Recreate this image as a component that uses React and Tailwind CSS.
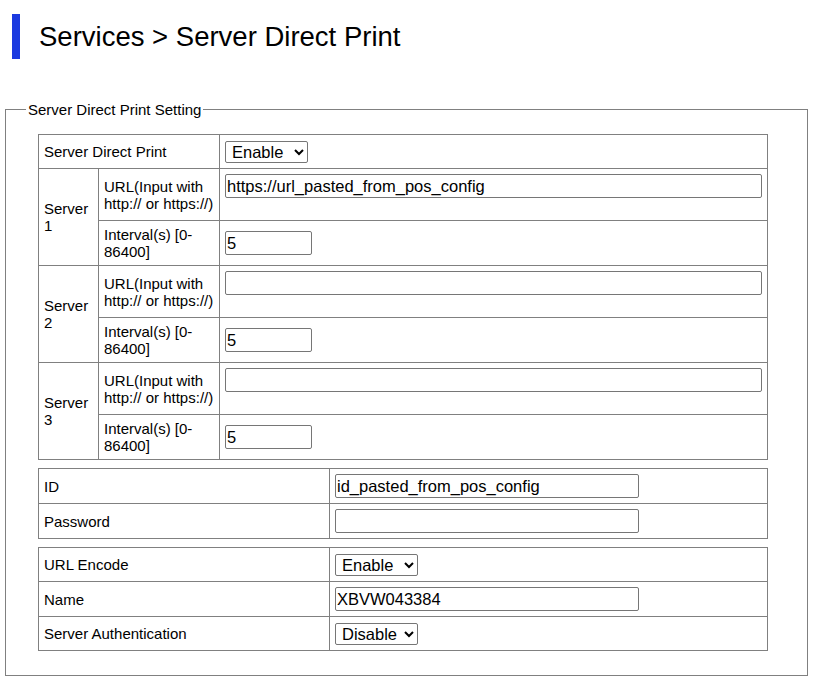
import React, { useState } from "react";

const cell = "border-r border-b border-[#808080] flex items-center px-[5px] leading-[17px]";

const Select = ({ value, onChange, options }) => (
  <select
    value={value}
    onChange={(e) => onChange(e.target.value)}
    className="w-[83px] h-[22px] border border-[#767676] rounded-[2px] bg-white text-[16.5px] text-black pl-[2px]"
  >
    {options.map((o) => (
      <option key={o}>{o}</option>
    ))}
  </select>
);

const TextInput = ({ width, value }) => {
  const [v, setV] = useState(value);
  return (
    <input
      type="text"
      value={v}
      onChange={(e) => setV(e.target.value)}
      className={`${width} h-[24px] border border-[#767676] rounded-[2px] px-[1px] text-[16.5px] text-black bg-white`}
    />
  );
};

const App = () => {
  const [sdp, setSdp] = useState("Enable");
  const [encode, setEncode] = useState("Enable");
  const [auth, setAuth] = useState("Disable");

  const servers = [
    { n: 1, url: "https://url_pasted_from_pos_config" },
    { n: 2, url: "" },
    { n: 3, url: "" },
  ];

  return (
    <div className="font-['Liberation_Sans',Arial,sans-serif] text-black bg-white min-h-[686px]">
      <div className="pt-[14px] pl-[12px] flex items-center">
        <div className="w-2 h-[45px] bg-[#1b3ae0]" />
        <h1 className="ml-[19px] text-[27.5px] leading-[32px] font-normal">Services &gt; Server Direct Print</h1>
      </div>

      <fieldset className="ml-[5px] w-[803px] mt-[42px] border border-[#808080] px-8 pt-[16px] pb-[24px]">
        <legend className="-ml-3 px-[2px] text-[15px] leading-[17px]">Server Direct Print Setting</legend>

        <div className="w-[730px] grid grid-cols-[60px_121px_548px] grid-rows-[34px_52px_45px_52px_45px_52px_45px] border-l border-t border-[#808080] text-[15px]">
          <div className={`${cell} col-span-2`}>Server Direct Print</div>
          <div className={cell}>
            <Select value={sdp} onChange={setSdp} options={["Enable", "Disable"]} />
          </div>
          {servers.map((s) => (
            <React.Fragment key={s.n}>
              <div className={`${cell} row-span-2`}>Server<br />{s.n}</div>
              <div className={cell}>URL(Input with<br />http:// or https://)</div>
              <div className="border-r border-b border-[#808080] px-[5px] pt-[5px]">
                <TextInput width="w-[537px]" value={s.url} />
              </div>
              <div className={cell}>Interval(s) [0-<br />86400]</div>
              <div className={cell}>
                <TextInput width="w-[87px]" value="5" />
              </div>
            </React.Fragment>
          ))}
        </div>

        <div className="mt-2 w-[730px] grid grid-cols-[291px_438px] grid-rows-[35px_35px] border-l border-t border-[#808080] text-[15px]">
          <div className={cell}>ID</div>
          <div className={cell}>
            <TextInput width="w-[304px]" value="id_pasted_from_pos_config" />
          </div>
          <div className={cell}>Password</div>
          <div className={cell}>
            <TextInput width="w-[304px]" value="" />
          </div>
        </div>

        <div className="mt-2 w-[730px] grid grid-cols-[291px_438px] grid-rows-[34px_35px_34px] border-l border-t border-[#808080] text-[15px]">
          <div className={cell}>URL Encode</div>
          <div className={cell}>
            <Select value={encode} onChange={setEncode} options={["Enable", "Disable"]} />
          </div>
          <div className={cell}>Name</div>
          <div className={cell}>
            <TextInput width="w-[304px]" value="XBVW043384" />
          </div>
          <div className={cell}>Server Authentication</div>
          <div className={cell}>
            <Select value={auth} onChange={setAuth} options={["Enable", "Disable"]} />
          </div>
        </div>
      </fieldset>
    </div>
  );
};

export default App;
